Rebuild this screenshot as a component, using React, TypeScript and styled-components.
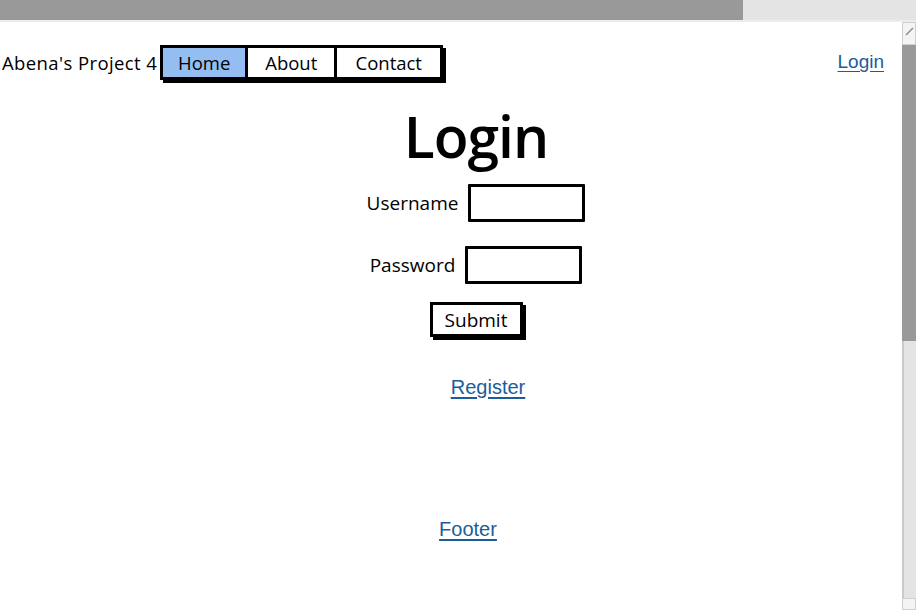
import React from "react";
import styled, { createGlobalStyle } from "styled-components";

const Global = createGlobalStyle`
  html, body { margin: 0; padding: 0; background: #ffffff; }
  body { font-family: "Liberation Sans", Arial, sans-serif; overflow: hidden; }
  * { box-sizing: border-box; }
`;

const Page = styled.div`
  width: 916px;
  height: 610px;
  display: flex;
  flex-direction: column;
  overflow: hidden;
`;

const TopBar = styled.div`
  height: 22px;
  display: flex;
  border-bottom: 2px solid #ececec;
`;

const TopSegment = styled.div<{ $dark?: boolean }>`
  flex: ${(p) => (p.$dark ? "0 0 743px" : "1")};
  background: ${(p) => (p.$dark ? "#999999" : "#e4e4e4")};
`;

const Body = styled.div`
  flex: 1;
  display: flex;
  min-height: 0;
`;

const Content = styled.div`
  flex: 1;
  display: flex;
  flex-direction: column;
`;

const Header = styled.header`
  display: flex;
  align-items: center;
  height: 36px;
  margin-top: 22px;
  padding: 0 18px 0 2px;
`;

const Brand = styled.span`
  font-family: "Open Sans", "Liberation Sans", sans-serif;
  font-size: 18.5px;
  letter-spacing: 0.4px;
  color: #000;
  margin-right: 3px;
`;

const Tabs = styled.nav`
  display: flex;
  height: 35px;
  border: 3px solid #000;
  box-shadow: 3px 3px 0 #000;
`;

const Tab = styled.div<{ $active?: boolean; $w: number; $last?: boolean }>`
  width: ${(p) => p.$w}px;
  display: flex;
  align-items: center;
  justify-content: center;
  background: ${(p) => (p.$active ? "#94bdf2" : "#ffffff")};
  border-right: ${(p) => (p.$last ? "none" : "3px solid #000")};
  font-family: "Open Sans", "Liberation Sans", sans-serif;
  font-size: 18.5px;
  color: #000;
`;

const Spacer = styled.div`
  flex: 1;
`;

const Link = styled.a<{ $size?: number }>`
  font-family: "Liberation Sans", Arial, sans-serif;
  font-size: ${(p) => p.$size ?? 19}px;
  color: #1d5c9c;
  text-decoration: underline;
  text-underline-offset: 3px;
  cursor: pointer;
`;

const Form = styled.main`
  display: flex;
  flex-direction: column;
  align-items: center;
  padding-left: 50px;
`;

const Title = styled.h1`
  margin: 25px 0 0 0;
  font-family: "Open Sans", "Liberation Sans", sans-serif;
  font-weight: 600;
  font-size: 57px;
  line-height: 62px;
  letter-spacing: -1px;
  color: #000;
`;

const Row = styled.div<{ $top: number }>`
  display: flex;
  align-items: center;
  gap: 10px;
  margin-top: ${(p) => p.$top}px;
`;

const Label = styled.label`
  font-family: "Open Sans", "Liberation Sans", sans-serif;
  font-size: 19px;
  color: #000;
`;

const Input = styled.input`
  width: 117px;
  height: 38px;
  border: 3px solid #000;
  border-radius: 1px;
  background: #fff;
  outline: none;
  padding: 0 6px;
`;

const Submit = styled.button`
  margin-top: 18px;
  width: 93px;
  height: 35px;
  border: 3px solid #000;
  background: #fff;
  box-shadow: 3px 3px 0 #000;
  font-family: "Open Sans", "Liberation Sans", sans-serif;
  font-size: 19px;
  color: #000;
  padding: 0;
`;

const LinkLine = styled.div<{ $top: number; $shift: number }>`
  margin-top: ${(p) => p.$top}px;
  margin-left: ${(p) => (p.$shift > 0 ? p.$shift : 0)}px;
  margin-right: ${(p) => (p.$shift < 0 ? -p.$shift : 0)}px;
`;

const Scrollbar = styled.div`
  width: 14px;
  display: flex;
  flex-direction: column;
  background: #e4e4e4;
`;

const ArrowBox = styled.div<{ $h: number }>`
  height: ${(p) => p.$h}px;
  background: #f4f4f4;
  border: 1px solid #cfcfcf;
  overflow: hidden;
`;

const Thumb = styled.div`
  height: 296px;
  background: #999999;
`;

const Track = styled.div`
  flex: 1;
  border-left: 2px solid #c9c9c9;
  background: #e4e4e4;
`;

export default function App() {
  return (
    <>
      <Global />
      <Page>
        <TopBar>
          <TopSegment $dark />
          <TopSegment />
        </TopBar>
        <Body>
          <Content>
            <Header>
              <Brand>Abena's Project 4</Brand>
              <Tabs>
                <Tab $active $w={85}>Home</Tab>
                <Tab $w={89}>About</Tab>
                <Tab $w={103} $last>Contact</Tab>
              </Tabs>
              <Spacer />
              <Link $size={19}>Login</Link>
            </Header>
            <Form>
              <Title>Login</Title>
              <Row $top={17}>
                <Label>Username</Label>
                <Input type="text" />
              </Row>
              <Row $top={24}>
                <Label>Password</Label>
                <Input type="password" />
              </Row>
              <Submit>Submit</Submit>
              <LinkLine $top={39} $shift={24}>
                <Link $size={20}>Register</Link>
              </LinkLine>
              <LinkLine $top={119} $shift={-16}>
                <Link $size={20}>Footer</Link>
              </LinkLine>
            </Form>
          </Content>
          <Scrollbar>
            <ArrowBox $h={23}>
              <svg width="12" height="21" viewBox="0 0 12 21">
                <path d="M3 12 L10 5" stroke="#8a8a8a" strokeWidth="1.5" fill="none" />
              </svg>
            </ArrowBox>
            <Thumb />
            <Track />
            <ArrowBox $h={12} />
          </Scrollbar>
        </Body>
      </Page>
    </>
  );
}
